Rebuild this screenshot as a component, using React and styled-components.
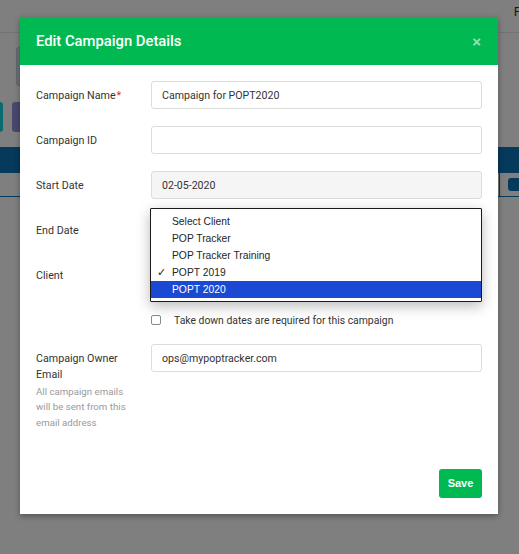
import React from "react";
import styled, { createGlobalStyle } from "styled-components";

const Global = createGlobalStyle`
  html, body { margin: 0; padding: 0; }
  body {
    width: 519px;
    height: 554px;
    overflow: hidden;
    font-family: Roboto, "Noto Sans", Arial, sans-serif;
    background: #fff;
  }
  * { box-sizing: border-box; }
`;

/* ---------- page behind the modal ---------- */

const Page = styled.div`
  position: relative;
  width: 519px;
  height: 554px;
  background: #fff;
  overflow: hidden;
`;

const TopBar = styled.div`
  height: 33px;
  border-bottom: 1px solid #e6e6e6;
  display: flex;
  justify-content: flex-end;
  align-items: flex-start;
  padding-top: 4px;
  font-size: 13px;
  color: #333;
  margin-right: -3px;
`;

const SummaryRow = styled.div`
  display: flex;
  padding: 14px 0 0 16px;
  height: 69px;
`;

const SummaryCard = styled.div`
  width: 60px;
  height: 39px;
  border-radius: 3px;
  background: #d8e2ee;
  border: 1px solid #c0ccd8;
`;

const ButtonRow = styled.div`
  display: flex;
  gap: 9px;
  margin-left: -6px;
  height: 45px;
`;

const PageButton = styled.div`
  width: ${(p) => p.$w}px;
  height: 30px;
  border-radius: 3px;
  background: ${(p) => p.$bg};
`;

const TableHead = styled.div`
  height: 26px;
  background: #0b74bb;
`;

const TableRow = styled.div`
  height: 24px;
  display: flex;
  justify-content: flex-end;
  align-items: center;
  border-bottom: 1px solid #0b74bb;
`;

const TableCell = styled.div`
  height: 100%;
  width: 20px;
  border-left: 1px solid #0b74bb;
  display: flex;
  align-items: center;
  justify-content: flex-end;
`;

const SmallButton = styled.div`
  width: 11px;
  height: 13px;
  border-radius: 3px 0 0 3px;
  background: #0b74bb;
`;

const Backdrop = styled.div`
  position: absolute;
  inset: 0;
  background: rgba(0, 0, 0, 0.5);
  display: flex;
  justify-content: flex-start;
  align-items: flex-start;
  padding: 17px 0 0 20px;
`;

/* ---------- modal ---------- */

const Modal = styled.div`
  width: 478px;
  background: #fff;
  box-shadow: 0 2px 6px rgba(0, 0, 0, 0.35);
  display: flex;
  flex-direction: column;
`;

const Header = styled.div`
  height: 48px;
  background: #00ba51;
  display: flex;
  align-items: center;
  justify-content: space-between;
  padding: 0 16px;
`;

const Title = styled.h4`
  margin: 0;
  font-size: 14.8px;
  font-weight: 500;
  color: #fff;
`;

const Close = styled.span`
  font-family: "Liberation Sans", Arial, sans-serif;
  font-size: 15px;
  font-weight: 700;
  line-height: 1;
  color: rgba(255, 255, 255, 0.6);
  margin: 1px 1px 0 0;
`;

const Body = styled.div`
  padding: 16px 16px 0;
  display: flex;
  flex-direction: column;
`;

const Row = styled.div`
  display: flex;
  gap: 15px;
  margin-bottom: ${(p) => p.$mb ?? 17}px;
  position: relative;
`;

const LabelCol = styled.div`
  width: 100px;
  flex: none;
  padding-top: 6.5px;
`;

const Label = styled.label`
  display: block;
  font-size: 10.7px;
  line-height: 16px;
  color: #333;
`;

const Required = styled.span`
  color: #e0262b;
  margin-left: 1px;
`;

const Hint = styled.div`
  font-size: 9.7px;
  line-height: 15.7px;
  color: #9a9a9a;
  margin-top: 1px;
`;

const Field = styled.div`
  flex: 1;
  height: 28px;
  border: 1px solid #dcdcdc;
  border-radius: 3px;
  background: ${(p) => (p.$disabled ? "#f5f5f5" : "#fff")};
  padding: 0 10px;
  display: flex;
  align-items: center;
  font-size: 10.6px;
  color: #333;
`;

const CheckRow = styled.div`
  display: flex;
  align-items: center;
  margin: 17px 0 10px 115px;
  height: 28px;
`;

const CheckBox = styled.span`
  width: 10px;
  height: 10px;
  border: 1px solid #8a8a8a;
  border-radius: 2px;
  background: #fff;
  flex: none;
`;

const CheckText = styled.span`
  margin-left: 13px;
  font-size: 10.4px;
  color: #333;
`;

/* native-style option list open over the form */
const OptionList = styled.ul`
  position: absolute;
  left: 114px;
  top: -8px;
  width: 332px;
  margin: 0;
  padding: 4px 0 3px;
  list-style: none;
  background: #fff;
  border: 1px solid #1a1a1a;
  border-radius: 1px;
  box-shadow: 0 4px 14px rgba(0, 0, 0, 0.28);
  z-index: 2;
  font-family: "Liberation Sans", Arial, Helvetica, sans-serif;
`;

const Option = styled.li`
  position: relative;
  height: 17px;
  line-height: 17px;
  padding-left: 21px;
  font-size: 10.3px;
  color: ${(p) => (p.$active ? "#fff" : "#262626")};
  background: ${(p) => (p.$active ? "#1c49d3" : "transparent")};
`;

const Tick = styled.span`
  position: absolute;
  left: 6px;
  top: 0;
  font-size: 10.5px;
`;

const Footer = styled.div`
  display: flex;
  justify-content: flex-end;
  padding: 0 16px 16px;
  margin-top: 38px;
`;

const SaveButton = styled.button`
  width: 43px;
  height: 29px;
  border: none;
  border-radius: 3px;
  background: #00ba51;
  color: #fff;
  font-family: "Liberation Sans", Arial, sans-serif;
  font-size: 11px;
  font-weight: 700;
  padding: 0;
`;

const clients = [
  { name: "Select Client" },
  { name: "POP Tracker" },
  { name: "POP Tracker Training" },
  { name: "POPT 2019", checked: true },
  { name: "POPT 2020", active: true },
];

export default function App() {
  return (
    <Page>
      <Global />
      <TopBar>P</TopBar>
      <SummaryRow>
        <SummaryCard />
      </SummaryRow>
      <ButtonRow>
        <PageButton $w={9} $bg="#17d4de" />
        <PageButton $w={60} $bg="#9393dc" />
      </ButtonRow>
      <TableHead />
      <TableRow>
        <TableCell>
          <SmallButton />
        </TableCell>
      </TableRow>

      <Backdrop>
        <Modal>
          <Header>
            <Title>Edit Campaign Details</Title>
            <Close>×</Close>
          </Header>
          <Body>
            <Row>
              <LabelCol>
                <Label>
                  Campaign Name<Required>*</Required>
                </Label>
              </LabelCol>
              <Field>Campaign for POPT2020</Field>
            </Row>
            <Row>
              <LabelCol>
                <Label>Campaign ID</Label>
              </LabelCol>
              <Field />
            </Row>
            <Row>
              <LabelCol>
                <Label>Start Date</Label>
              </LabelCol>
              <Field $disabled>02-05-2020</Field>
            </Row>
            <Row>
              <LabelCol>
                <Label>End Date</Label>
              </LabelCol>
              <Field />
              <OptionList>
                {clients.map((c) => (
                  <Option key={c.name} $active={c.active}>
                    {c.checked && <Tick>✓</Tick>}
                    {c.name}
                  </Option>
                ))}
              </OptionList>
            </Row>
            <Row $mb={0}>
              <LabelCol>
                <Label>Client</Label>
              </LabelCol>
              <Field />
            </Row>
            <CheckRow>
              <CheckBox />
              <CheckText>Take down dates are required for this campaign</CheckText>
            </CheckRow>
            <Row $mb={0}>
              <LabelCol>
                <Label>Campaign Owner Email</Label>
                <Hint>All campaign emails will be sent from this email address</Hint>
              </LabelCol>
              <Field>ops@mypoptracker.com</Field>
            </Row>
          </Body>
          <Footer>
            <SaveButton>Save</SaveButton>
          </Footer>
        </Modal>
      </Backdrop>
    </Page>
  );
}
